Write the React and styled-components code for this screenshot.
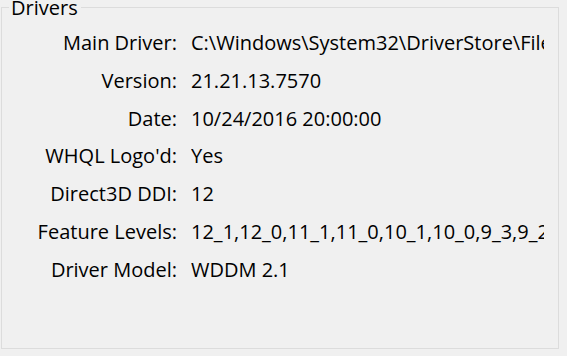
import React from "react";
import styled, { createGlobalStyle } from "styled-components";

const Global = createGlobalStyle`
  html, body { margin: 0; padding: 0; background: #f0f0f0; }
  body { width: 567px; height: 356px; overflow: hidden; font-family: "Open Sans", "Noto Sans", sans-serif; color: #000; }
`;

const Group = styled.fieldset`
  box-sizing: border-box;
  margin: 0 0 0 1px;
  padding: 0;
  width: 558px;
  height: 349px;
  border: 1px solid #dcdcdc;
  min-inline-size: 0;
`;

const Legend = styled.legend`
  margin-left: 7px;
  padding: 2px 3px 0 2px;
  font-size: 20px;
  line-height: 12px;
`;

const Grid = styled.div`
  display: grid;
  grid-template-columns: 175px 353px;
  column-gap: 14px;
  grid-auto-rows: 37.83px;
  align-items: center;
  padding-top: 10px;
  font-size: 20px;
  line-height: 26px;
`;

const Label = styled.div`
  text-align: right;
  white-space: nowrap;
`;

const Value = styled.div`
  white-space: nowrap;
  overflow: hidden;
`;

const rows = [
  ["Main Driver:", "C:\\Windows\\System32\\DriverStore\\FileRepository\\nvlt.inf_amd64_d9b5d4d4a3e3e2b1\\nvldumdx.dll"],
  ["Version:", "21.21.13.7570"],
  ["Date:", "10/24/2016 20:00:00"],
  ["WHQL Logo'd:", "Yes"],
  ["Direct3D DDI:", "12"],
  ["Feature Levels:", "12_1,12_0,11_1,11_0,10_1,10_0,9_3,9_2,9_1"],
  ["Driver Model:", "WDDM 2.1"],
];

export default function App() {
  return (
    <>
      <Global />
      <Group>
        <Legend>Drivers</Legend>
        <Grid>
          {rows.map(([l, v]) => (
            <React.Fragment key={l}>
              <Label>{l}</Label>
              <Value>{v}</Value>
            </React.Fragment>
          ))}
        </Grid>
      </Group>
    </>
  );
}
